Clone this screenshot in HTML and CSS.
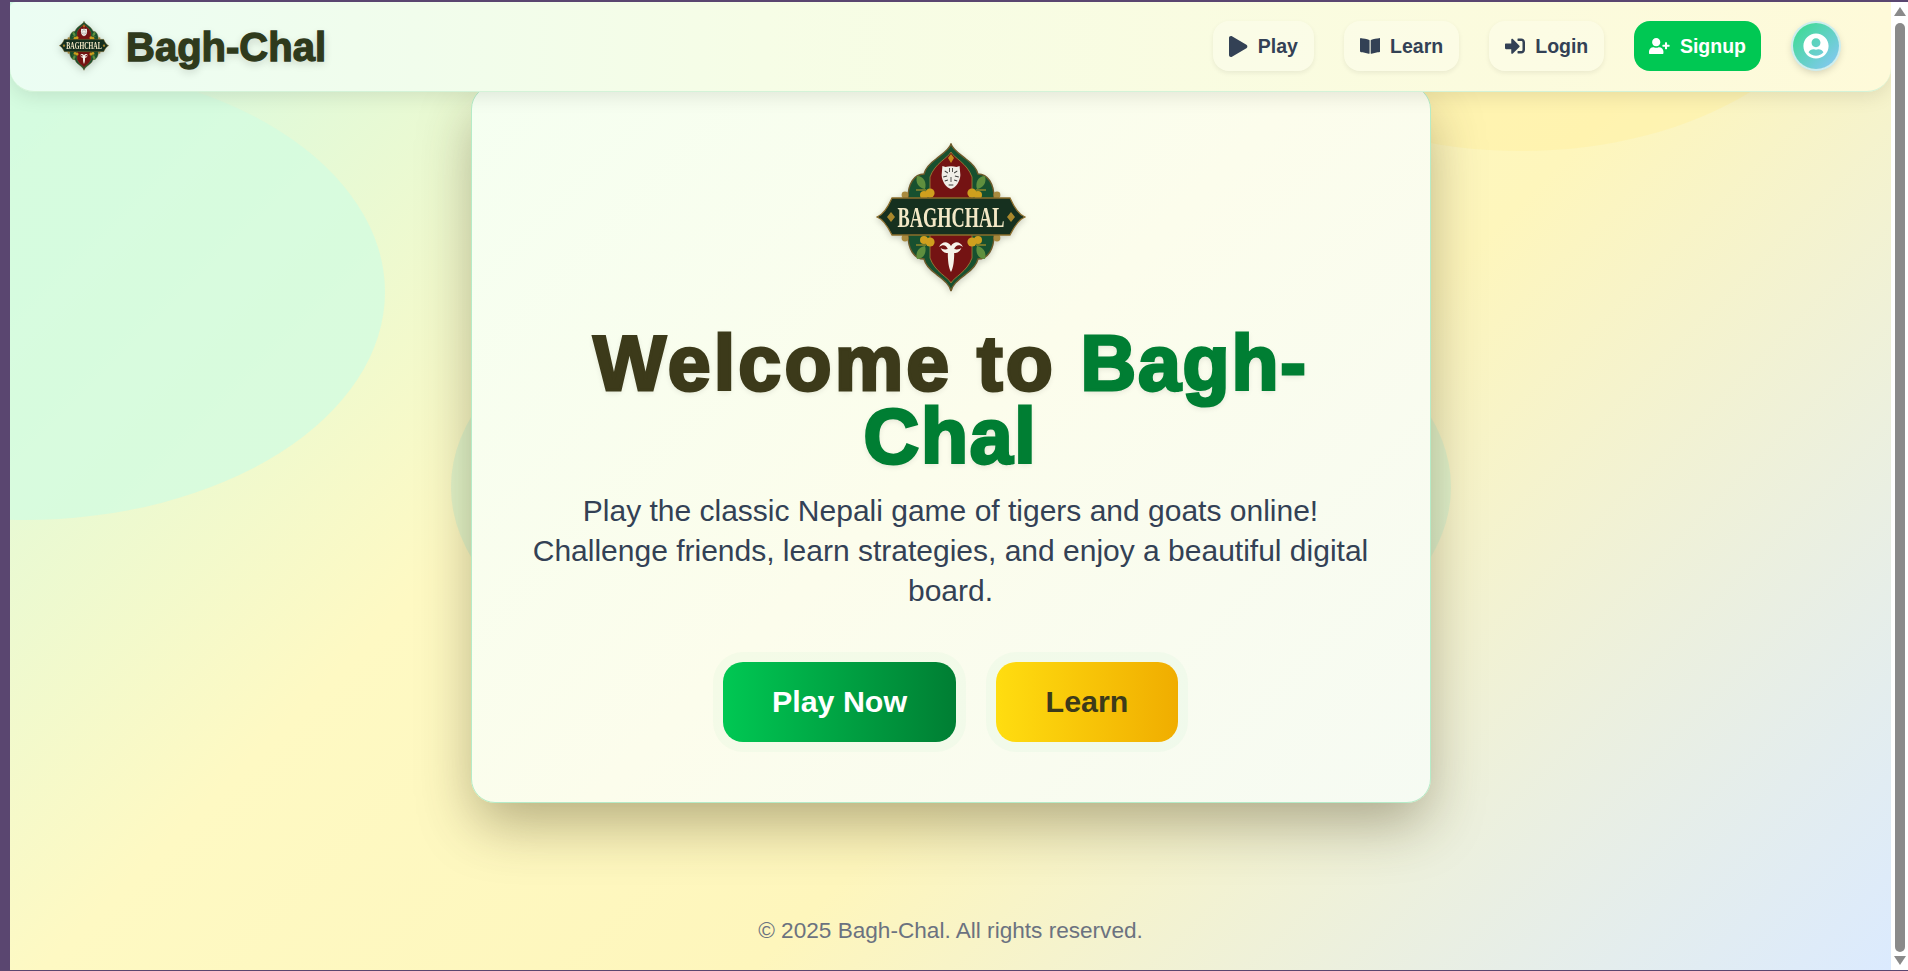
FILE: index.html
```html
<!DOCTYPE html>
<html lang="en">
<head>
  <meta charset="UTF-8" />
  <meta name="viewport" content="width=device-width, initial-scale=1.0" />
  <title>Bagh-Chal</title>
  <link rel="stylesheet" href="styles.css">
</head>
<body>
  <svg class="sprites" width="0" height="0" aria-hidden="true">
    <symbol id="logo" viewBox="0 0 150 150">
      <!-- outer dome -->
      <path d="M75 1C77 7 84 11 90 16C97 21 101 27 102 31C112 31 118 41 118 55L118 92C118 106 112 116 102 116C101 120 97 126 90 131C84 136 77 140 75 148C73 140 66 136 60 131C53 126 49 120 48 116C38 116 32 106 32 92L32 55C32 41 38 31 48 31C49 27 53 21 60 16C66 11 73 7 75 1Z" fill="#17502f" stroke="#6d5a2a" stroke-width="1.4"/>
      <!-- red arches -->
      <path d="M75 9C78 15 91 20 96 34L96 56L54 56L54 34C59 20 72 15 75 9Z" fill="#741313" stroke="#a5863a" stroke-width=".8"/>
      <path d="M75 140C78 134 91 129 96 115L96 91L54 91L54 115C59 129 72 134 75 140Z" fill="#741313" stroke="#a5863a" stroke-width=".8"/>
      <!-- leaves -->
      <path d="M41 33C48 33 51 40 49 46C43 45 39 40 41 33ZM109 33C102 33 99 40 101 46C107 45 111 40 109 33ZM41 116C48 116 51 109 49 103C43 104 39 109 41 116ZM109 116C102 116 99 109 101 103C107 104 111 109 109 116Z" fill="#5f8f3e"/>
      <path d="M40 47H50M110 47H100M40 102H50M110 102H100" stroke="#c9a02a" stroke-width="1"/>
      <!-- gold flowers -->
      <g fill="#cf9f1e">
        <circle cx="48" cy="52" r="4"/><circle cx="54" cy="50" r="4.6"/><circle cx="102" cy="52" r="4"/><circle cx="96" cy="50" r="4.6"/>
        <circle cx="48" cy="97" r="4"/><circle cx="54" cy="99" r="4.6"/><circle cx="102" cy="97" r="4"/><circle cx="96" cy="99" r="4.6"/>
        <circle cx="29" cy="52" r="3.4" fill="#a98a3e"/><circle cx="121" cy="52" r="3.4" fill="#a98a3e"/>
        <circle cx="29" cy="95" r="3.4" fill="#a98a3e"/><circle cx="121" cy="95" r="3.4" fill="#a98a3e"/>
        <path d="M75 11L78 15L75 20L72 15Z" fill="#c98a1c"/>
      </g>
      <!-- tiger -->
      <g transform="translate(75 0) scale(.78 1) translate(-75 0)">
        <path d="M64 23L68 24C72 23 78 23 82 24L86 23L87 32C87 38 81 45 75 46C69 45 63 38 63 32Z" fill="#f0eee8"/>
        <path d="M67 28L71 30M83 28L79 30M73 25V29M77 25V29M65 34L70 33M85 34L80 33M67 38L71 37M83 38L79 37M75 34V39M72 42H78" stroke="#3d3d3b" stroke-width="1.1" fill="none"/>
      </g>
      <!-- goat -->
      <path transform="translate(75 0) scale(.8 1) translate(-75 0)" d="M60 104C64 98 71 98 75 103C79 98 86 98 90 104C85 101 81 102 79 106C83 107 86 106 88 105C85 110 81 110 79 110C79 117 78 125 75 129C72 125 71 117 71 110C69 110 65 110 62 105C64 106 67 107 71 106C69 102 65 101 60 104Z" fill="#f6f3ea"/>
      <!-- banner -->
      <path d="M1 74C7 72 12 64 16 55L134 55C138 64 143 72 149 74C143 76 138 84 134 92L16 92C12 84 7 76 1 74Z" fill="#16301f" stroke="#8a6d2b" stroke-width="1.3"/>
      <path d="M15 69L19 74L15 79L11 74ZM135 69L139 74L135 79L131 74Z" fill="#a9872c"/>
      <text x="75" y="83.5" class="logo-text" textLength="107" lengthAdjust="spacingAndGlyphs" text-anchor="middle">BAGHCHAL</text>
    </symbol>
  </svg>

  <div class="window">
    <div class="page">
      <div class="blob blob-left"></div>
      <div class="blob blob-top"></div>
      <div class="blob blob-center"></div>

      <nav class="navbar">
        <a class="brand" href="#">
          <svg class="brand-logo"><use href="#logo"/></svg>
          <span class="brand-name">Bagh-Chal</span>
        </a>
        <div class="nav-links">
          <a class="nav-btn" href="#">
            <svg class="ico ico-play" viewBox="0 0 448 512"><path d="M424.4 214.7L72.4 6.6C43.8-10.3 0 6.1 0 47.9V464c0 37.5 40.7 60.1 72.4 41.3l352-208c31.4-18.5 31.5-64.1 0-82.6z"/></svg>
            Play
          </a>
          <a class="nav-btn" href="#">
            <svg class="ico ico-book" viewBox="0 0 576 512"><path d="M542.22 32.05c-54.8 3.11-163.72 14.43-230.96 55.59-4.64 2.84-7.27 7.89-7.27 13.17v363.87c0 11.55 12.63 18.85 23.28 13.49 69.18-34.82 169.23-44.32 218.7-46.92 16.89-.89 30.02-14.43 30.02-30.66V62.75c.01-17.71-15.35-31.74-33.77-30.7zM264.73 87.64C197.5 46.48 88.58 35.17 33.78 32.05 15.36 31.01 0 45.04 0 62.75V400.6c0 16.24 13.13 29.78 30.02 30.66 49.49 2.6 149.59 12.11 218.77 46.95 10.62 5.35 23.21-1.94 23.21-13.46V100.63c0-5.29-2.62-10.14-7.27-12.99z"/></svg>
            Learn
          </a>
          <a class="nav-btn" href="#">
            <svg class="ico ico-login" viewBox="0 0 512 512"><path d="M416 448h-84c-6.6 0-12-5.4-12-12v-40c0-6.6 5.4-12 12-12h84c17.7 0 32-14.3 32-32V160c0-17.7-14.3-32-32-32h-84c-6.6 0-12-5.4-12-12V76c0-6.6 5.4-12 12-12h84c53 0 96 43 96 96v192c0 53-43 96-96 96zm-47-201L201 79c-15-15-41-4.5-41 17v96H24c-13.3 0-24 10.7-24 24v96c0 13.3 10.7 24 24 24h136v96c0 21.5 26 32 41 17l168-168c9.3-9.4 9.3-24.6 0-34z"/></svg>
            Login
          </a>
          <a class="nav-btn nav-signup" href="#">
            <svg class="ico ico-user" viewBox="0 0 640 512"><path d="M624 208h-64v-64c0-8.8-7.2-16-16-16h-32c-8.8 0-16 7.2-16 16v64h-64c-8.8 0-16 7.2-16 16v32c0 8.8 7.2 16 16 16h64v64c0 8.8 7.2 16 16 16h32c8.8 0 16-7.2 16-16v-64h64c8.8 0 16-7.2 16-16v-32c0-8.8-7.2-16-16-16zm-400 48c70.7 0 128-57.3 128-128S294.7 0 224 0 96 57.3 96 128s57.3 128 128 128zm89.6 32h-16.7c-22.2 10.2-46.9 16-72.9 16s-50.6-5.8-72.9-16h-16.7C60.2 288 0 348.2 0 422.4V464c0 26.5 21.5 48 48 48h352c26.5 0 48-21.5 48-48v-41.6c0-74.2-60.2-134.4-134.4-134.4z"/></svg>
            Signup
          </a>
          <div class="avatar">
            <svg viewBox="0 0 496 512"><path d="M248 8C111 8 0 119 0 256s111 248 248 248 248-111 248-248S385 8 248 8zm0 96c48.6 0 88 39.4 88 88s-39.4 88-88 88-88-39.4-88-88 39.4-88 88-88zm0 344c-58.7 0-111.3-26.6-146.5-68.2 18.8-35.4 55.6-59.8 98.5-59.8 2.4 0 4.8.4 7.1 1.1 13 4.2 26.6 6.9 40.9 6.9 14.3 0 28-2.7 40.9-6.9 2.3-.7 4.7-1.1 7.1-1.1 42.9 0 79.7 24.4 98.5 59.8C359.3 421.4 306.7 448 248 448z"/></svg>
          </div>
        </div>
      </nav>

      <main class="main">
        <section class="card">
          <svg class="card-logo"><use href="#logo"/></svg>
          <h1 class="title">Welcome to <span class="title-accent">Bagh-Chal</span></h1>
          <p class="lead">Play the classic Nepali game of tigers and goats online! Challenge friends, learn strategies, and enjoy a beautiful digital board.</p>
          <div class="actions">
            <a class="cta cta-play" href="#">Play Now</a>
            <a class="cta cta-learn" href="#">Learn</a>
          </div>
        </section>
      </main>

      <footer class="footer">© 2025 Bagh-Chal. All rights reserved.</footer>
    </div>

    <div class="scrollbar">
      <span class="arrow arrow-up"></span>
      <span class="thumb"></span>
      <span class="arrow arrow-down"></span>
    </div>
  </div>
</body>
</html>
```

FILE: styles.css
```css
* { box-sizing: border-box }
html, body { height: 100% }
body { margin: 0; background: #5a4670; font-family: "Liberation Sans", Arial, sans-serif; overflow: hidden }
a { text-decoration: none }
.sprites { position: absolute }

.window { display: flex; height: 100%; padding: 2px 0 1px 10px }
.page { flex: 1; min-width: 0; position: relative; overflow: hidden; display: flex; flex-direction: column; background: linear-gradient(135deg, #d1fae5 0%, #fef9c3 35%, #fef6bc 60%, #dbeafe 100%) }

/* Background blobs */
.blob { position: absolute; border-radius: 50% }
.blob-left { left: -347px; top: 62px; width: 722px; height: 456px; background: #d5fbdf; opacity: .85 }
.blob-top { left: 1188px; top: -251px; width: 646px; height: 400px; background: #fff2a6; opacity: .6 }
.blob-center { left: 441px; top: 235px; width: 1000px; height: 500px; background: #c6f0d0; opacity: .45 }

/* Navbar */
.navbar { position: relative; z-index: 2; flex: none; height: 90px; display: flex; align-items: center; justify-content: space-between; padding: 0 52px 2px 49px; background: linear-gradient(90deg, #ebfdf3 0%, #f6fde6 40%, #fefad9 100%); border-bottom: 1px solid #d4f3d8; border-radius: 6px 0 24px 24px; box-shadow: 0 4px 20px rgba(0,0,0,.1) }
.brand { display: flex; align-items: center; gap: 17px; font-size: 40px; font-weight: bold; color: #2f3a1c; -webkit-text-stroke: 1.3px #2f3a1c; text-shadow: 0 3px 8px rgba(0,0,0,.18) }
.brand-logo { width: 50px; height: 50px; filter: drop-shadow(0 2px 4px rgba(0,0,0,.2)) }
.brand-name { padding-top: 3px }
.nav-links { display: flex; align-items: center; gap: 30px }
.nav-btn { display: flex; align-items: center; gap: 10px; height: 50px; padding: 1px 16px 0; border-radius: 16px; font-size: 19.5px; font-weight: bold; color: #334155; background: rgba(255,255,255,.22); box-shadow: 0 2px 5px rgba(0,0,0,.07) }
.ico { width: auto; fill: currentColor }
.ico-play { height: 21px }
.ico-book { height: 18px }
.ico-login { height: 20px }
.ico-user { height: 16.5px }
.nav-signup { padding: 1px 15px 0; color: #fff; background: #00c853; box-shadow: none }
.avatar { width: 46px; height: 46px; margin-left: 2px; border-radius: 50%; display: flex; align-items: center; justify-content: center; background: linear-gradient(135deg, #38dd8c, #8ac6fa); box-shadow: 0 0 0 2px #cdeef0, 0 3px 8px rgba(0,0,0,.2) }
.avatar svg { width: 26px; height: 26px; fill: #fff }

/* Card */
.main { position: relative; z-index: 1; flex: none; display: flex; justify-content: center }
.card { width: 960px; height: 718px; margin-top: -7px; padding-top: 57px; display: flex; flex-direction: column; align-items: center; text-align: center; border: 1.5px solid #b5ecc8; border-radius: 24px; background: linear-gradient(135deg, #f5fff1 0%, #fcfdec 50%, #f6fbf3 100%); box-shadow: 0 24px 56px -4px rgba(60,50,20,.38) }
.card-logo { width: 150px; height: 150px; flex: none; filter: drop-shadow(0 2px 3px rgba(0,0,0,.2)) }
.logo-text { font-family: "Liberation Serif", serif; font-size: 29px; font-weight: bold; fill: #f3e8c6 }
.title { margin: 34px 0 0; width: 800px; font-size: 77px; line-height: 73px; font-weight: bold; color: #3c3a1a; -webkit-text-stroke: 3px currentColor; letter-spacing: 3.2px; text-shadow: 0 2px 6px rgba(0,0,0,.12) }
.title-accent { color: #007e33; letter-spacing: 1.8px }
.lead { margin: 18px 0 0; width: 850px; font-size: 30px; line-height: 40px; color: #334155 }
.actions { display: flex; gap: 40px; margin-top: 51px }
.cta { display: flex; align-items: center; justify-content: center; height: 80px; padding-bottom: 2px; border-radius: 20px; font-size: 30.4px; font-weight: bold; box-shadow: 0 0 0 10px rgba(0,200,83,.03) }
.cta-play { width: 233px; color: #fff; background: linear-gradient(90deg, #00c853, #007e33) }
.cta-learn { width: 182px; color: #3c3a1a; background: linear-gradient(90deg, #ffdd10, #f0ad00) }

.footer { position: relative; z-index: 1; margin-top: auto; padding-bottom: 26px; text-align: center; font-size: 22.6px; line-height: 26px; color: #6b7280 }

/* Fake window scrollbar */
.scrollbar { flex: none; width: 17px; background: #fff; display: flex; flex-direction: column; align-items: center; padding: 5px 0 }
.thumb { flex: 1; width: 10px; margin: 7px 0 4px; background: #8a8a8a; border-radius: 5px }
.arrow { width: 0; height: 0; border-left: 6px solid transparent; border-right: 6px solid transparent }
.arrow-up { border-bottom: 9px solid #8a8a8a }
.arrow-down { border-top: 9px solid #8a8a8a }
```
